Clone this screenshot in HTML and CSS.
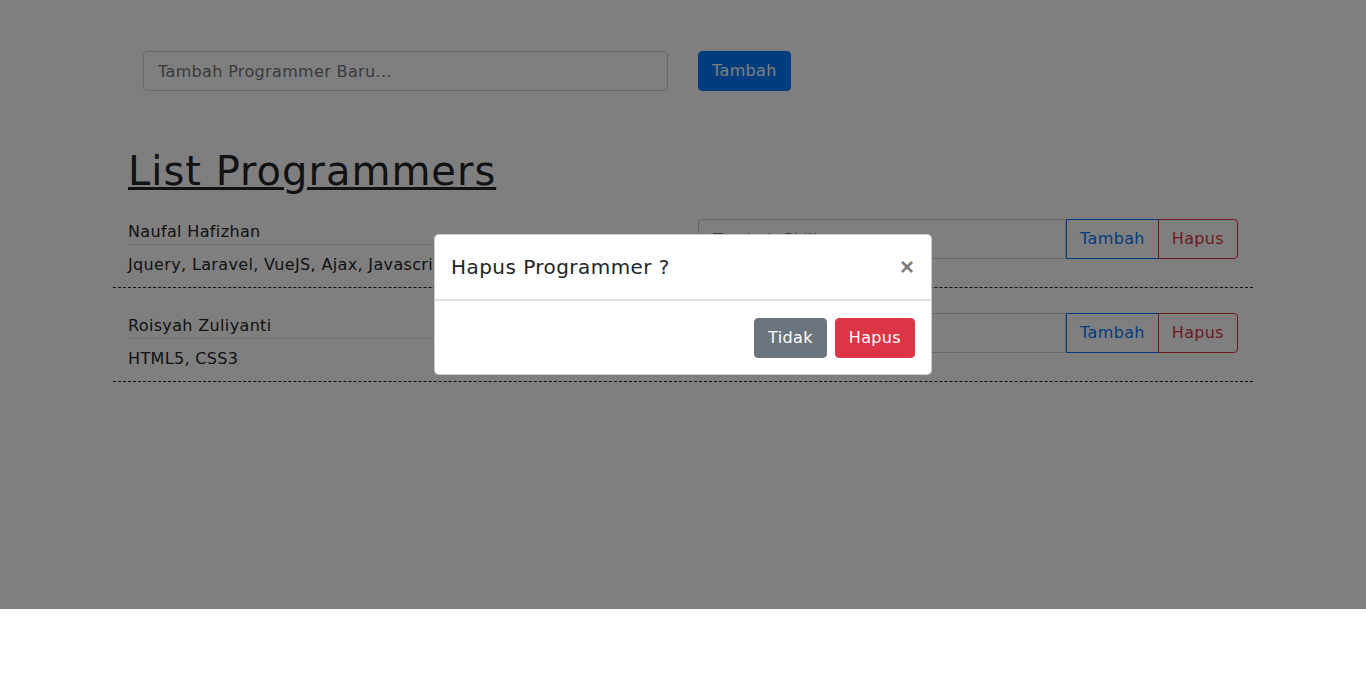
FILE: index.html
```html
<!DOCTYPE html>
<html lang="id">
<head>
<meta charset="utf-8">
<title>List Programmers</title>
<link rel="stylesheet" href="styles.css">
</head>
<body>
<div class="container">
  <form class="add-form">
    <input class="form-control add-input" type="text" placeholder="Tambah Programmer Baru...">
    <button type="button" class="btn btn-primary">Tambah</button>
  </form>

  <h1 class="title">List Programmers</h1>

  <div class="item">
    <div class="col-left">
      <div class="name">Naufal Hafizhan</div>
      <div class="skills">Jquery, Laravel, VueJS, Ajax, Javascript</div>
    </div>
    <div class="col-right">
      <div class="input-group">
        <input class="form-control group-input" type="text" placeholder="Tambah Skill...">
        <button type="button" class="btn btn-outline-primary">Tambah</button>
        <button type="button" class="btn btn-outline-danger last">Hapus</button>
      </div>
    </div>
  </div>

  <div class="item">
    <div class="col-left">
      <div class="name">Roisyah Zuliyanti</div>
      <div class="skills">HTML5, CSS3</div>
    </div>
    <div class="col-right">
      <div class="input-group">
        <input class="form-control group-input" type="text" placeholder="Tambah Skill...">
        <button type="button" class="btn btn-outline-primary">Tambah</button>
        <button type="button" class="btn btn-outline-danger last">Hapus</button>
      </div>
    </div>
  </div>
</div>

<div class="backdrop"></div>

<div class="modal">
  <div class="modal-header">
    <h5 class="modal-title">Hapus Programmer ?</h5>
    <button type="button" class="close">&times;</button>
  </div>
  <div class="modal-footer">
    <button type="button" class="btn btn-secondary">Tidak</button>
    <button type="button" class="btn btn-danger">Hapus</button>
  </div>
</div>
</body>
</html>
```

FILE: styles.css
```css
* { box-sizing: border-box; }

html, body {
  margin: 0;
  padding: 0;
}

body {
  font-family: "DejaVu Sans", "Open Sans", sans-serif;
  font-size: 16px;
  line-height: 1.5;
  letter-spacing: 0.35px;
  color: #212529;
  background: #fff;
  position: relative;
  min-height: 686px;
}

.container {
  width: 1140px;
  margin: 0 auto;
}

.add-form {
  display: flex;
  gap: 30px;
  padding: 51px 0 0 30px;
}

.form-control {
  font-family: inherit;
  font-size: 16px;
  letter-spacing: inherit;
  height: 40px;
  padding: 6px 14px;
  border: 1px solid #ced4da;
  border-radius: 4px;
  color: #495057;
  background: #fff;
}

.form-control::placeholder { color: #6c757d; }

.add-input { width: 525px; }

.btn {
  font-family: inherit;
  font-size: 16px;
  letter-spacing: inherit;
  line-height: 1.5;
  height: 40px;
  padding: 6px 13px;
  border: 1px solid transparent;
  border-radius: 4px;
  cursor: pointer;
}

.btn-primary { background: #007bff; border-color: #007bff; color: #fff; }
.btn-secondary { background: #6c757d; border-color: #6c757d; color: #fff; }
.btn-danger { background: #dc3545; border-color: #dc3545; color: #fff; }
.btn-outline-primary { background: transparent; border-color: #007bff; color: #007bff; }
.btn-outline-danger { background: transparent; border-color: #dc3545; color: #dc3545; }

.title {
  font-size: 40px;
  font-weight: 400;
  line-height: 1.2;
  letter-spacing: 1px;
  margin: 56px 0 0 15px;
  text-decoration: underline;
  text-decoration-thickness: 3px;
  text-underline-offset: 2px;
}

.item {
  display: flex;
  gap: 30px;
  margin-top: 25px;
  padding: 0 15px 10px;
  border-bottom: 1px dashed #222;
}

.title + .item { margin-top: 24px; }

.col-left { width: 540px; }
.col-right { width: 540px; }

.name {
  line-height: 25px;
  border-bottom: 1px solid #dee2e6;
}

.skills {
  line-height: 24px;
  padding-top: 8px;
}

.input-group {
  display: flex;
}

.group-input {
  flex: 1;
  min-width: 0;
  border-radius: 4px 0 0 4px;
}

.input-group .btn { border-radius: 0; }
.input-group .btn.last { border-radius: 0 4px 4px 0; margin-left: -1px; }

.backdrop {
  position: absolute;
  top: 0;
  left: 0;
  width: 100%;
  height: 609px;
  background: rgba(0, 0, 0, 0.5);
}

.modal {
  position: absolute;
  top: 234px;
  left: 50%;
  margin-left: -249px;
  width: 498px;
  background: #fff;
  border: 1px solid rgba(0, 0, 0, 0.2);
  border-radius: 5px;
}

.modal-header {
  display: flex;
  align-items: center;
  justify-content: space-between;
  height: 66px;
  padding: 0 16px;
  border-bottom: 2px solid #dee2e6;
}

.modal-title {
  margin: 0;
  font-size: 20px;
  font-weight: 400;
  line-height: 1.5;
  letter-spacing: 0.45px;
}

.close {
  background: none;
  border: 0;
  padding: 0 1px 0 0;
  font-family: "Liberation Sans", sans-serif;
  font-size: 24px;
  font-weight: 700;
  color: #000;
  opacity: 0.5;
  line-height: 1;
  cursor: pointer;
}

.modal-footer {
  display: flex;
  justify-content: flex-end;
  gap: 8px;
  padding: 17px 16px 16px;
}
```
